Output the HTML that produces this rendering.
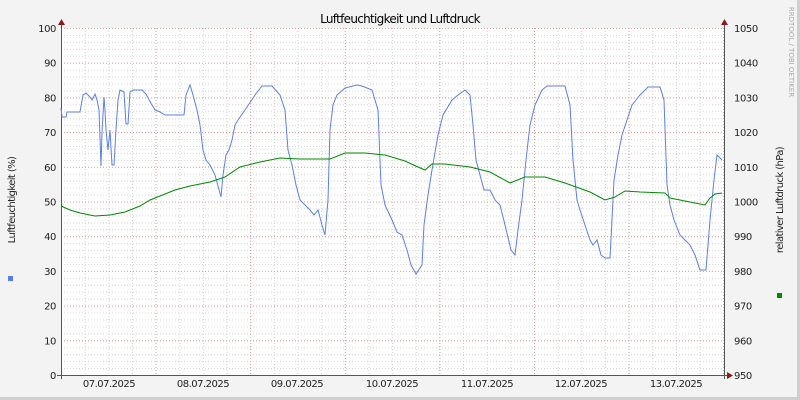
<!DOCTYPE html>
<html><head><meta charset="utf-8"><style>
html,body{margin:0;padding:0;background:#f3f3f3;}
svg{display:block;font-family:"DejaVu Sans","Liberation Sans",sans-serif;}
</style></head><body>
<svg width="800" height="400" viewBox="0 0 800 400" xmlns="http://www.w3.org/2000/svg">
<defs>
<pattern id="hmin" x="61" y="28" width="663" height="6.94" patternUnits="userSpaceOnUse">
<line x1="0" y1="0.5" x2="663" y2="0.5" stroke="#d6d6d6" stroke-width="1" stroke-dasharray="1,2"/>
</pattern>
<pattern id="vmin" x="61" y="28" width="23.65" height="347" patternUnits="userSpaceOnUse">
<line x1="0.5" y1="0" x2="0.5" y2="347" stroke="#d6d6d6" stroke-width="1" stroke-dasharray="1,2"/>
</pattern>
<pattern id="hmaj" x="61" y="28" width="663" height="34.7" patternUnits="userSpaceOnUse">
<line x1="0" y1="0.5" x2="663" y2="0.5" stroke="#e3a0a0" stroke-width="1" stroke-dasharray="1,2"/>
</pattern>
<pattern id="vmaj" x="61" y="28" width="94.6" height="347" patternUnits="userSpaceOnUse">
<line x1="0.5" y1="0" x2="0.5" y2="347" stroke="#e3a0a0" stroke-width="1" stroke-dasharray="1,2"/>
</pattern>
</defs>
<rect x="0" y="0" width="800" height="400" fill="#f3f3f3"/>
<rect x="797" y="0" width="3" height="400" fill="#cfcfcf"/>
<rect x="0" y="397" width="800" height="3" fill="#cfcfcf"/>
<rect x="61" y="28" width="663" height="347" fill="#fff"/>
<rect x="61" y="28" width="663" height="347" fill="url(#hmin)"/>
<rect x="61" y="28" width="663" height="347" fill="url(#vmin)"/>
<rect x="61" y="28" width="663" height="347" fill="url(#hmaj)"/>
<rect x="61" y="28" width="663" height="347" fill="url(#vmaj)"/>
<line x1="61.5" y1="24" x2="61.5" y2="379" stroke="#555"/>
<line x1="724.5" y1="24" x2="724.5" y2="379" stroke="#555"/>
<line x1="57" y1="375.5" x2="728" y2="375.5" stroke="#555"/>
<polygon points="58,25 65,25 61.5,19" fill="#8b1a1a"/>
<polygon points="721,25 728,25 724.5,19" fill="#8b1a1a"/>
<polygon points="727,372 727,379 733,375.5" fill="#8b1a1a"/>
<text x="400" y="23" font-size="12" text-anchor="middle" fill="#000" letter-spacing="-0.7">Luftfeuchtigkeit und Luftdruck</text>
<g font-size="10" fill="#222" text-anchor="end" letter-spacing="-0.4">
<text x="56" y="32">100</text><text x="56" y="66.7">90</text><text x="56" y="101.4">80</text><text x="56" y="136.1">70</text><text x="56" y="170.8">60</text><text x="56" y="205.5">50</text><text x="56" y="240.2">40</text><text x="56" y="274.9">30</text><text x="56" y="309.6">20</text><text x="56" y="344.3">10</text><text x="56" y="379">0</text>
</g>
<g font-size="10" fill="#222" letter-spacing="-0.4">
<text x="734" y="32">1050</text><text x="734" y="66.7">1040</text><text x="734" y="101.4">1030</text><text x="734" y="136.1">1020</text><text x="734" y="170.8">1010</text><text x="734" y="205.5">1000</text><text x="734" y="240.2">990</text><text x="734" y="274.9">980</text><text x="734" y="309.6">970</text><text x="734" y="344.3">960</text><text x="734" y="379">950</text>
</g>
<g font-size="10" fill="#222" text-anchor="middle" letter-spacing="-0.5">
<text x="109" y="387">07.07.2025</text><text x="203" y="387">08.07.2025</text><text x="297" y="387">09.07.2025</text><text x="392" y="387">10.07.2025</text><text x="487" y="387">11.07.2025</text><text x="581" y="387">12.07.2025</text><text x="676" y="387">13.07.2025</text>
</g>
<text transform="translate(15,200) rotate(-90)" font-size="10" text-anchor="middle" fill="#222" letter-spacing="-0.6">Luftfeuchtigkeit (%)</text>
<text transform="translate(783,200) rotate(-90)" font-size="10" text-anchor="middle" fill="#222" letter-spacing="-0.6">relativer Luftdruck (hPa)</text>
<text transform="translate(789,52) rotate(90)" font-size="7" text-anchor="middle" fill="#aaa">RRDTOOL / TOBI OETIKER</text>
<rect x="8" y="276" width="5" height="5" fill="#5b7fe8"/>
<rect x="777" y="293" width="5" height="5" fill="#008a00"/>
<polyline fill="none" stroke="#5b7fe8" stroke-width="1" points="61,108 62,117 66,117 67,112 80,112 83,95 86,93 90,97 92,100 95,94 97,100 99,110 101,166 102,132 104,97 105,110 106,130 108,150 110,130 112,165 114,165 116,130 118,100 120,90 124,92 126,124 128,124 130,92 133,90 142,90 146,94 152,105 155,110 160,112 165,115 184,115 186,95 190,85 193,95 197,110 200,125 203,150 206,160 210,165 215,175 221,197 223,175 226,155 229,150 232,140 235,125 238,120 245,110 255,95 262,86 272,86 280,95 285,110 288,150 292,165 296,185 300,200 305,205 310,210 314,215 318,210 322,225 325,235 328,200 330,130 333,105 337,95 345,88 357,85 362,86 372,90 378,110 381,185 385,205 392,220 397,232 402,235 407,250 411,265 416,274 422,265 424,225 428,195 432,170 438,135 443,115 452,100 458,95 465,90 470,95 473,125 476,160 480,175 484,190 490,190 495,200 500,205 505,225 511,250 515,255 518,230 522,200 526,160 530,125 535,105 542,90 547,86 565,86 570,105 573,160 577,200 580,210 585,225 590,240 593,245 597,240 601,255 605,258 610,258 614,180 618,155 622,135 627,120 632,105 640,95 648,87 660,87 664,100 667,185 670,205 674,220 680,235 685,240 690,245 695,255 700,270 706,270 710,220 714,180 717,155 720,158 722,160"/>
<polyline fill="none" stroke="#008a00" stroke-width="1" points="61,206 70,210 80,213 95,216 110,215 125,212 140,206 150,200 160,196 175,190 190,186 210,182 225,177 240,167 260,162 280,158 300,159 330,159 345,153 365,153 385,155 405,161 418,167 425,170 432,164 445,164 470,167 490,172 510,183 525,177 545,177 565,183 590,192 605,200 615,197 625,191 640,192 665,193 670,198 685,201 695,203 705,205 710,198 715,194 722,193"/>
</svg>
</body></html>
